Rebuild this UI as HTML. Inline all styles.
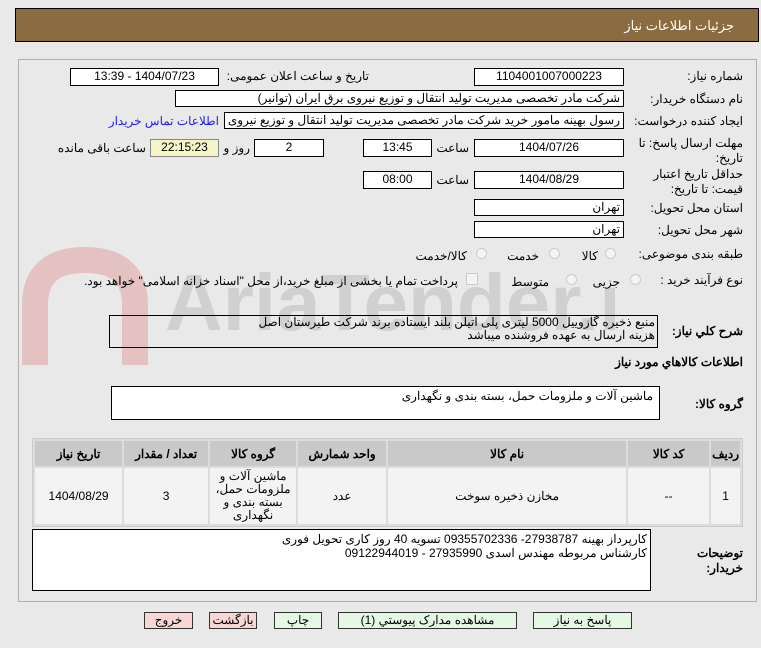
<!DOCTYPE html>
<html><head><meta charset="utf-8"><style>
body{margin:0;width:761px;height:648px;background:#e9e9e9;font-family:Tahoma,"Liberation Sans","Noto Sans CJK SC",sans-serif;font-size:12px;color:#000;position:relative;overflow:hidden}
.a{position:absolute;white-space:nowrap}
.hdr{left:15px;top:8px;width:744px;height:34px;background:#8b6b40;border:1px solid #000;box-sizing:border-box}
.hdr span{position:absolute;right:24px;top:9px;color:#fff;font-size:13px}
.panel{left:18px;top:59px;width:739px;height:543px;border:1px solid #b0b0b0;box-sizing:border-box}
.b{position:absolute;background:#fff;border:1px solid #000;box-sizing:border-box;direction:rtl;text-align:center;line-height:15px;white-space:nowrap;overflow:hidden}
.l{position:absolute;direction:rtl;white-space:nowrap}
.r{position:absolute;width:11px;height:11px;border-radius:50%;border:1px solid #ccc;background:#f4f4f4;box-sizing:border-box}
table{position:absolute;left:32px;top:438px;width:711px;border-collapse:separate;border-spacing:2px;background:#dcdcdc;border:1px solid #ccc;direction:rtl}
th{background:#c9c9c9;height:23px;font-weight:bold;font-size:12px}
td{background:#f3f3f3;height:54px;text-align:center;font-size:12px;line-height:13px}
.btn{position:absolute;top:612px;height:17px;border:1px solid #333;box-sizing:border-box;background:#e4f8e4;text-align:center;line-height:15px;direction:rtl;font-size:12px}
.pk{background:#f9d6d6}
</style></head><body>
<div class="a hdr"><span>جزئیات اطلاعات نیاز</span></div>
<div class="a panel"></div>
<svg class="a" style="left:15px;top:245px" width="600" height="120"><path d="M20 120 L20 60 Q20 15 70 15 Q120 15 120 60 L120 120" stroke="#e2a8a8" stroke-width="26" fill="none" opacity=".6"/><text x="150" y="85" font-size="80" font-weight="bold" fill="#d0d0d0" font-family="Liberation Sans">AriaTender.net</text></svg>

<div class="l" style="right:18px;top:69px">شماره نیاز:</div>
<div class="b" style="left:474px;top:68px;width:150px;height:18px">1104001007000223</div>
<div class="l" style="right:392px;top:69px">تاریخ و ساعت اعلان عمومی:</div>
<div class="b" style="left:70px;top:68px;width:149px;height:18px">1404/07/23 - 13:39</div>

<div class="l" style="right:18px;top:92px">نام دستگاه خریدار:</div>
<div class="b" style="left:175px;top:90px;width:449px;height:17px;text-align:right;padding-right:3px">شرکت مادر تخصصی مدیریت تولید  انتقال و توزیع نیروی برق ایران (توانیر)</div>

<div class="l" style="right:18px;top:114px">ایجاد کننده درخواست:</div>
<div class="b" style="left:224px;top:112px;width:400px;height:17px;text-align:right;padding-right:3px">رسول بهینه مامور خرید شرکت مادر تخصصی مدیریت تولید  انتقال و توزیع نیروی</div>
<div class="l" style="right:542px;top:114px;color:#1a1aff">اطلاعات تماس خریدار</div>

<div class="l" style="right:18px;top:136px;line-height:15px;text-align:right">مهلت ارسال پاسخ: تا<br>تاریخ:</div>
<div class="b" style="left:474px;top:139px;width:150px;height:18px">1404/07/26</div>
<div class="l" style="right:292px;top:141px">ساعت</div>
<div class="b" style="left:363px;top:139px;width:69px;height:18px">13:45</div>
<div class="b" style="left:254px;top:139px;width:70px;height:18px">2</div>
<div class="l" style="right:511px;top:141px">روز و</div>
<div class="b" style="left:150px;top:139px;width:69px;height:18px;background:#f5f5c8;border-color:#888">22:15:23</div>
<div class="l" style="right:615px;top:141px">ساعت باقی مانده</div>

<div class="l" style="right:18px;top:167px;line-height:15px;text-align:right">حداقل تاریخ اعتبار<br>قیمت: تا تاریخ:</div>
<div class="b" style="left:474px;top:171px;width:150px;height:18px">1404/08/29</div>
<div class="l" style="right:292px;top:173px">ساعت</div>
<div class="b" style="left:363px;top:171px;width:69px;height:18px">08:00</div>

<div class="l" style="right:18px;top:201px">استان محل تحویل:</div>
<div class="b" style="left:474px;top:199px;width:150px;height:17px;text-align:right;padding-right:3px">تهران</div>
<div class="l" style="right:18px;top:223px">شهر محل تحویل:</div>
<div class="b" style="left:474px;top:221px;width:150px;height:17px;text-align:right;padding-right:3px">تهران</div>

<div class="l" style="right:18px;top:247px">طبقه بندی موضوعی:</div>
<div class="r" style="left:605px;top:248px"></div><div class="l" style="right:163px;top:249px">کالا</div>
<div class="r" style="left:549px;top:248px"></div><div class="l" style="right:222px;top:249px">خدمت</div>
<div class="r" style="left:476px;top:248px"></div><div class="l" style="right:294px;top:249px">کالا/خدمت</div>

<div class="l" style="right:18px;top:273px">نوع فرآیند خرید :</div>
<div class="r" style="left:630px;top:274px"></div><div class="l" style="right:141px;top:275px">جزیی</div>
<div class="r" style="left:566px;top:274px"></div><div class="l" style="right:212px;top:275px">متوسط</div>
<div class="a" style="left:466px;top:273px;width:12px;height:12px;border:1px solid #ccc;background:#f4f4f4;box-sizing:border-box"></div>
<div class="l" style="right:303px;top:274px">پرداخت تمام یا بخشی از مبلغ خرید،از محل "اسناد خزانه اسلامی" خواهد بود.</div>

<div class="l" style="right:18px;top:324px;font-weight:bold">شرح کلي نياز:</div>
<div class="b" style="left:109px;top:315px;width:549px;height:33px;text-align:right;padding-right:2px;line-height:13px;background:transparent">منبع ذخیره گازوییل 5000 لیتری پلی اتیلن بلند ایستاده برند شرکت طبرستان اصل<br>هزینه ارسال به عهده فروشنده میباشد</div>
<div class="l" style="right:18px;top:355px;font-weight:bold">اطلاعات کالاهاي مورد نياز</div>
<div class="l" style="right:18px;top:397px;font-weight:bold">گروه کالا:</div>
<div class="b" style="left:111px;top:386px;width:549px;height:34px;text-align:right;padding-right:6px;padding-top:2px">ماشین آلات و ملزومات حمل، بسته بندی و نگهداری</div>

<table><tr><th style="width:26px">رديف</th><th style="width:79px">کد کالا</th><th style="width:236px">نام کالا</th><th style="width:86px">واحد شمارش</th><th style="width:84px">گروه کالا</th><th style="width:82px">تعداد / مقدار</th><th>تاریخ نیاز</th></tr>
<tr><td>1</td><td>--</td><td>مخازن ذخیره سوخت</td><td>عدد</td><td>ماشین آلات و<br>ملزومات حمل،<br>بسته بندی و<br>نگهداری</td><td>3</td><td>1404/08/29</td></tr></table>

<div class="l" style="right:18px;top:546px;font-weight:bold;line-height:15px;text-align:right">توضیحات<br>خریدار:</div>
<div class="b" style="left:32px;top:529px;width:619px;height:62px;text-align:right;padding-right:3px;line-height:14px;padding-top:2px">کارپرداز بهینه 27938787- 09355702336  تسویه 40 روز کاری  تحویل فوری<br>کارشناس مربوطه مهندس اسدی 27935990 - 09122944019</div>

<div class="btn" style="left:533px;width:99px">پاسخ به نیاز</div>
<div class="btn" style="left:338px;width:179px">مشاهده مدارک پیوستي (1)</div>
<div class="btn" style="left:274px;width:48px">چاپ</div>
<div class="btn pk" style="left:209px;width:48px">بازگشت</div>
<div class="btn pk" style="left:144px;width:49px">خروج</div>
</body></html>
